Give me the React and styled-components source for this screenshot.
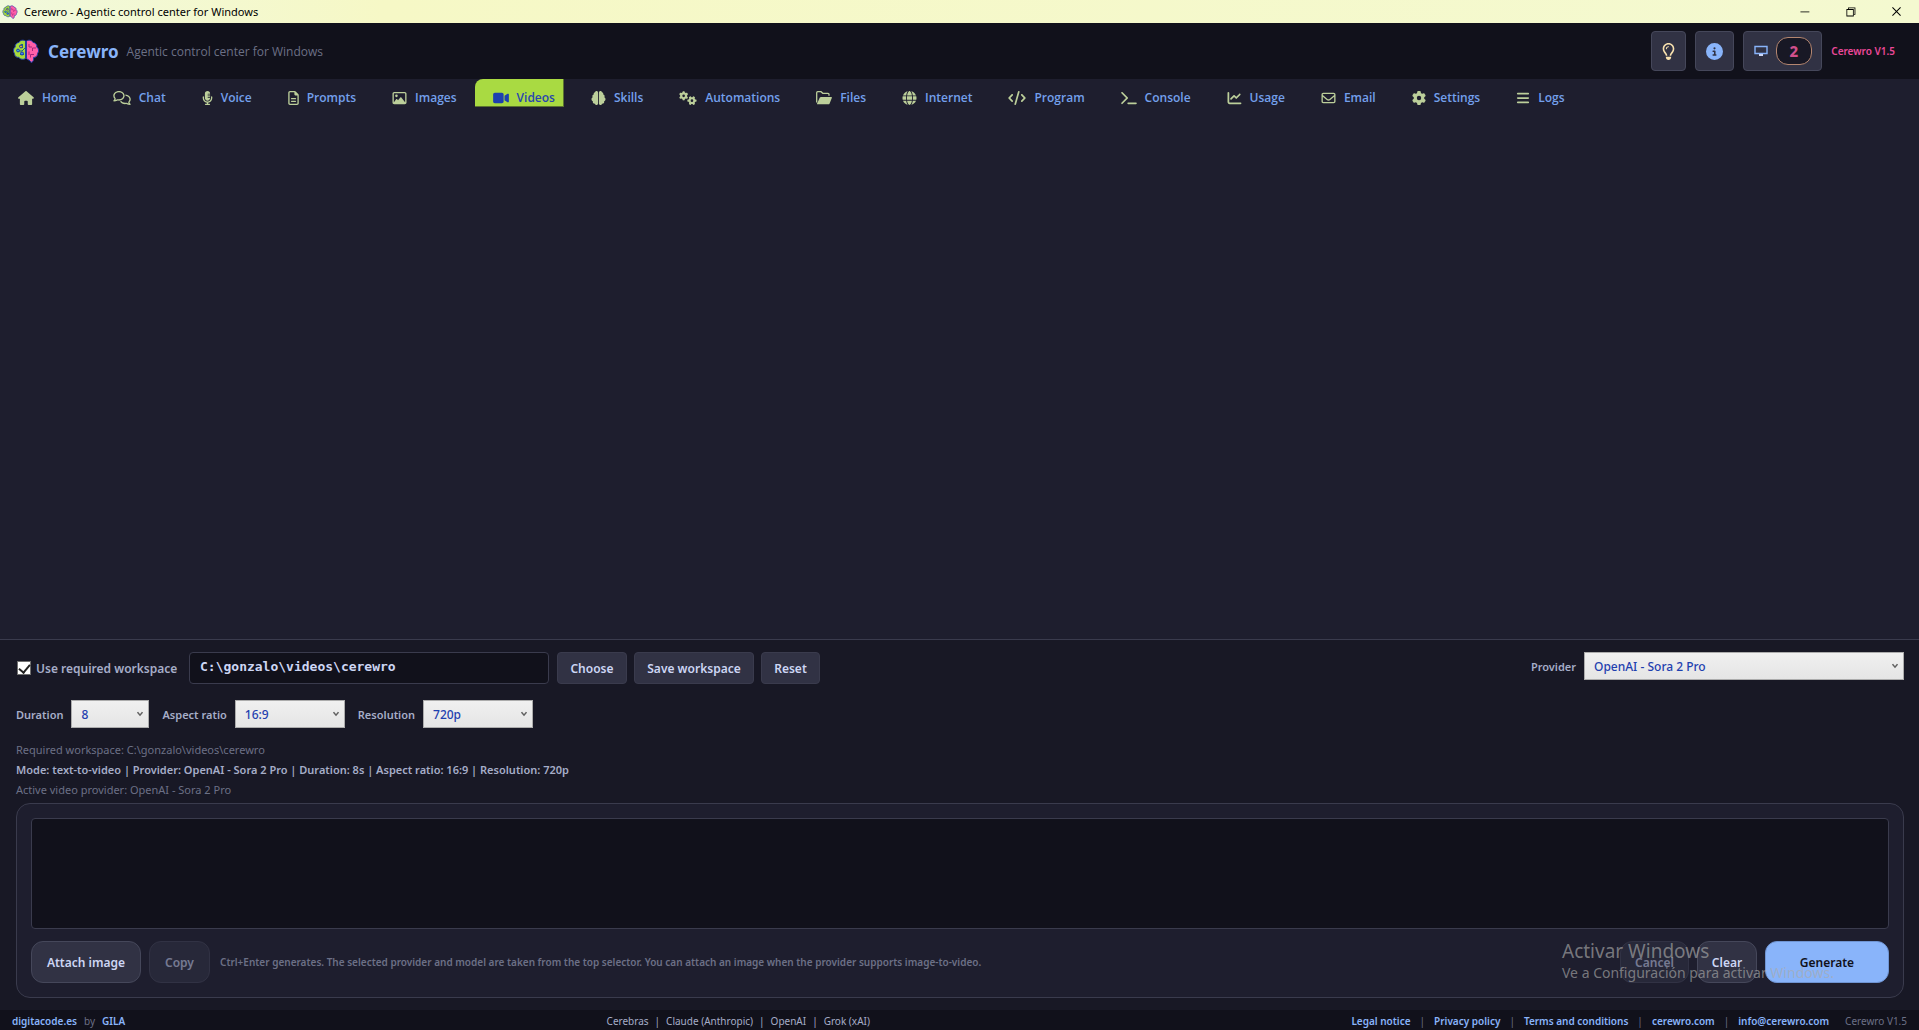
import React, { useState } from "react";
import styled, { createGlobalStyle } from "styled-components";
import {
  FaHouse,
  FaRegComments,
  FaMicrophoneLines,
  FaRegFileLines,
  FaRegImage,
  FaVideo,
  FaBrain,
  FaGears,
  FaGlobe,
  FaCode,
  FaTerminal,
  FaChartLine,
  FaRegEnvelope,
  FaGear,
  FaBars,
  FaRegLightbulb,
  FaCircleInfo,
} from "react-icons/fa6";
import {
  VscChromeMinimize,
  VscChromeRestore,
  VscChromeClose,
} from "react-icons/vsc";

const TABS = [
  { name: "Home", Icon: FaHouse, iconWidth: 16 },
  { name: "Chat", Icon: FaRegComments, iconWidth: 18 },
  { name: "Voice", Icon: FaMicrophoneLines, iconWidth: 11 },
  { name: "Prompts", Icon: FaRegFileLines, iconWidth: 11 },
  { name: "Images", Icon: FaRegImage, iconWidth: 15 },
  { name: "Videos", Icon: FaVideo, iconWidth: 16 },
  { name: "Skills", Icon: FaBrain, iconWidth: 15 },
  { name: "Automations", Icon: FaGears, iconWidth: 18 },
  { name: "Files", Icon: FolderIcon, iconWidth: 16 },
  { name: "Internet", Icon: FaGlobe, iconWidth: 15 },
  { name: "Program", Icon: FaCode, iconWidth: 18 },
  { name: "Console", Icon: FaTerminal, iconWidth: 16 },
  { name: "Usage", Icon: FaChartLine, iconWidth: 15 },
  { name: "Email", Icon: FaRegEnvelope, iconWidth: 15 },
  { name: "Settings", Icon: FaGear, iconWidth: 14 },
  { name: "Logs", Icon: FaBars, iconWidth: 14 },
];

const PARTNERS = ["Cerebras", "Claude (Anthropic)", "OpenAI", "Grok (xAI)"];

const LEGAL_LINKS = [
  "Legal notice",
  "Privacy policy",
  "Terms and conditions",
  "cerewro.com",
  "info@cerewro.com",
];

function BrainLogo({ size }) {
  return (
    <svg width={size} height={size} viewBox="0 0 28 28" aria-hidden="true">
      <path
        d="M13.6 4C11 2.4 8 3.200 7 5.400 4.500 5.600 2.800 7.800 3.200 10 1.200 11.500.8 14.500 2.400 16.400 2.400 19 4.600 20.800 6.800 20.400 8.400 22.600 11.600 23 13.600 21.400Z"
        fill="#a6da3c"
        stroke="#1e3aa8"
        strokeWidth="1"
      />
      <path
        d="M14.400 4C17 2.400 20 3.200 21 5.400 23.500 5.600 25.200 7.800 24.800 10 26.800 11.500 27.200 14.500 25.600 16.400 25.600 19 23.400 20.800 21.600 20.400 22 22.600 21 25.600 19 25.400 18 23 16 23 14.400 21.400Z"
        fill="#ff5fa8"
        stroke="#1e3aa8"
        strokeWidth="1"
      />
      <path
        d="M17 7v3h3M24 11h-3.500v3M17 18v-3.500M22 17.500h-3.500v3"
        fill="none"
        stroke="#a3267c"
        strokeWidth="1"
      />
      <path
        d="M7 9.500l3-2.500M5 14h5l3-3M8 17.500h4M10.500 7v4"
        fill="none"
        stroke="#1b5f8c"
        strokeWidth="1"
      />
      <circle cx="9" cy="9.500" r="1.400" fill="#ffb02e" stroke="#1e3aa8" />
      <circle cx="6" cy="13.500" r="1.400" fill="#2fb8e0" stroke="#1e3aa8" />
      <circle cx="10" cy="16.500" r="1.500" fill="#3b82f6" stroke="#1e3aa8" />
    </svg>
  );
}

/* open folder with an outlined back and a solid front */
function FolderIcon() {
  return (
    <svg viewBox="0 0 16 14" aria-hidden="true">
      <path
        d="M.7 11.500V1.700Q.7.7 1.700.7H5L6.800 2.300H12Q13 2.300 13 3.300V4.800"
        fill="none"
        stroke="currentColor"
        strokeWidth="1.300"
      />
      <path
        d="M5 6H15.200Q16.200 6 15.800 7L13.600 12.400Q13.200 13.300 12.200 13.300H1.300Q.8 13.300 1.100 12.600L3.700 6.800Q4.100 6 5 6Z"
        fill="currentColor"
      />
    </svg>
  );
}

function Select({ id, options, width }) {
  return (
    <SelectBox $width={width}>
      <SelectInput id={id}>
        {options.map((option) => (
          <option key={option}>{option}</option>
        ))}
      </SelectInput>
      <SelectArrow viewBox="0 0 6 6" aria-hidden="true">
        <path d="M.5 1.200L3 4.200 5.500 1.200" />
      </SelectArrow>
    </SelectBox>
  );
}

function App() {
  const [activeTab, setActiveTab] = useState("Videos");
  const [required, setRequired] = useState(true);
  const [workspace, setWorkspace] = useState("C:\\gonzalo\\videos\\cerewro");
  const [prompt, setPrompt] = useState("");

  return (
    <Window>
      <GlobalStyle />
      <TitleBar>
        <BrainLogo size={16} />
        <TitleText>Cerewro - Agentic control center for Windows</TitleText>
        <WindowButton aria-label="Minimize">
          <VscChromeMinimize />
        </WindowButton>
        <WindowButton aria-label="Restore">
          <VscChromeRestore />
        </WindowButton>
        <WindowButton aria-label="Close">
          <VscChromeClose />
        </WindowButton>
      </TitleBar>

      <Header>
        <BrainLogo size={28} />
        <Brand>Cerewro</Brand>
        <Tagline>Agentic control center for Windows</Tagline>
        <HeaderTools>
          <ToolButton $width={35} $color="#f9e2af" aria-label="Tips">
            <FaRegLightbulb size={17} />
          </ToolButton>
          <ToolButton $width={39} $color="#89b4fa" aria-label="Information">
            <FaCircleInfo size={17} />
          </ToolButton>
          <ToolButton $width={79} $color="#89b4fa" aria-label="Screens">
            <svg width="14" height="12" viewBox="0 0 14 12">
              <path
                d="M1 1.500h12v7H1z"
                fill="none"
                stroke="currentColor"
                strokeWidth="1.400"
              />
              <path d="M5 9h4v2H5z" fill="#cdd6f4" />
            </svg>
            <ScreenCount>2</ScreenCount>
          </ToolButton>
          <Version>Cerewro V1.5</Version>
        </HeaderTools>
      </Header>

      <Nav>
        {TABS.map(({ name, Icon, iconWidth }) => (
          <Tab
            key={name}
            $active={name === activeTab}
            onClick={() => setActiveTab(name)}
          >
            <TabIcon $width={iconWidth}>
              <Icon />
            </TabIcon>
            {name}
          </Tab>
        ))}
      </Nav>

      <Gallery />

      <Panel>
        <WorkspaceRow>
          <CheckLabel>
            <CheckBox
              type="checkbox"
              checked={required}
              onChange={(e) => setRequired(e.target.checked)}
            />
            Use required workspace
          </CheckLabel>
          <PathInput
            type="text"
            aria-label="Workspace path"
            value={workspace}
            onChange={(e) => setWorkspace(e.target.value)}
          />
          <SmallButtons>
            <SmallButton $width={70}>Choose</SmallButton>
            <SmallButton $width={120}>Save workspace</SmallButton>
            <SmallButton $width={59}>Reset</SmallButton>
          </SmallButtons>
          <ProviderField>
            <FieldLabel htmlFor="provider">Provider</FieldLabel>
            <Select
              id="provider"
              width={320}
              options={["OpenAI - Sora 2 Pro"]}
            />
          </ProviderField>
        </WorkspaceRow>

        <OptionsRow>
          <Field>
            <FieldLabel htmlFor="duration">Duration</FieldLabel>
            <Select id="duration" width={78} options={["8", "4", "12"]} />
          </Field>
          <Field>
            <FieldLabel htmlFor="ratio">Aspect ratio</FieldLabel>
            <Select id="ratio" width={110} options={["16:9", "9:16"]} />
          </Field>
          <Field>
            <FieldLabel htmlFor="resolution">Resolution</FieldLabel>
            <Select id="resolution" width={110} options={["720p", "1080p"]} />
          </Field>
        </OptionsRow>

        <Status>
          <StatusLine>Required workspace: {workspace}</StatusLine>
          <StatusLine $strong>
            Mode: text-to-video | Provider: OpenAI - Sora 2 Pro | Duration: 8s |
            Aspect ratio: 16:9 | Resolution: 720p
          </StatusLine>
          <StatusLine>Active video provider: OpenAI - Sora 2 Pro</StatusLine>
        </Status>

        <Composer>
          <PromptInput
            aria-label="Video prompt"
            value={prompt}
            onChange={(e) => setPrompt(e.target.value)}
          />
          <Actions>
            <ActionButton $width={110}>Attach image</ActionButton>
            <ActionButton $width={61} disabled>
              Copy
            </ActionButton>
            <Hint>
              Ctrl+Enter generates. The selected provider and model are taken
              from the top selector. You can attach an image when the provider
              supports image-to-video.
            </Hint>
            <ActionButton $width={69} disabled>
              Cancel
            </ActionButton>
            <ActionButton $width={60}>Clear</ActionButton>
            <ActionButton $width={124} $primary>
              Generate
            </ActionButton>
          </Actions>
        </Composer>
      </Panel>

      <Footer>
        <FooterGroup $gap={7}>
          <FooterLink href="#digitacode">digitacode.es</FooterLink>
          <Muted>by</Muted>
          <FooterLink href="#gila">GILA</FooterLink>
        </FooterGroup>
        <FooterGroup $gap={6}>
          {PARTNERS.map((partner, i) => (
            <React.Fragment key={partner}>
              {i > 0 && <span>|</span>}
              <span>{partner}</span>
            </React.Fragment>
          ))}
        </FooterGroup>
        <FooterGroup $gap={9}>
          {LEGAL_LINKS.map((link, i) => (
            <React.Fragment key={link}>
              {i > 0 && <Muted>|</Muted>}
              <FooterLink href={`#${i}`}>{link}</FooterLink>
            </React.Fragment>
          ))}
          <FooterVersion>Cerewro V1.5</FooterVersion>
        </FooterGroup>
      </Footer>

      <Watermark>
        <WatermarkTitle>Activar Windows</WatermarkTitle>
        <WatermarkText>
          Ve a Configuración para activar Windows.
        </WatermarkText>
      </Watermark>
    </Window>
  );
}

export default App;

const GlobalStyle = createGlobalStyle`
  * {
    box-sizing: border-box;
  }
  body {
    margin: 0;
    background-color: #1e1e2e;
  }
  button, input, select, textarea {
    font-family: inherit;
    margin: 0;
  }
`;

const Window = styled.div`
  position: relative;
  display: flex;
  flex-direction: column;
  min-height: 100vh;
  overflow: hidden;
  font-family: "Noto Sans", "Open Sans", sans-serif;
  font-size: 11px;
  color: #cdd6f4;
  background-color: #1e1e2e;
`;

const TitleBar = styled.div`
  display: flex;
  align-items: center;
  height: 23px;
  padding-left: 2px;
  background: linear-gradient(90deg, #f1f9dc, #f6f8c6 20%, #f4f9d0);
  color: #000000;
`;

const TitleText = styled.div`
  flex: 1;
  margin-left: 6px;
`;

const WindowButton = styled.button`
  display: flex;
  align-items: center;
  justify-content: center;
  width: 46px;
  height: 20px;
  padding: 0;
  border: 0;
  background: transparent;
  color: #000000;
  font-size: 13px;
`;

const Header = styled.header`
  display: flex;
  align-items: center;
  height: 56px;
  padding: 0 24px 0 12px;
  background-color: #11111b;
`;

const Brand = styled.div`
  margin-left: 8px;
  font-size: 17px;
  font-weight: 700;
  color: #89b4fa;
`;

const Tagline = styled.div`
  margin-left: 8px;
  font-family: "Open Sans", sans-serif;
  font-size: 12px;
  color: #6c7086;
`;

const HeaderTools = styled.div`
  display: flex;
  align-items: center;
  gap: 9px;
  margin-left: auto;
`;

const ToolButton = styled.button`
  display: flex;
  align-items: center;
  justify-content: center;
  gap: 8px;
  width: ${(props) => props.$width}px;
  height: 40px;
  padding: 0;
  border: 1px solid #45475a;
  border-radius: 4px;
  background-color: #313244;
  color: ${(props) => props.$color};
`;

const ScreenCount = styled.span`
  width: 36px;
  height: 28px;
  border: 1px solid #b48670;
  border-radius: 12px;
  background-color: #181825;
  color: #d0508c;
  font-size: 15px;
  font-weight: 800;
  line-height: 27px;
`;

const Version = styled.div`
  font-size: 10px;
  font-weight: 600;
  color: #ec4899;
`;

const Nav = styled.nav`
  display: flex;
  height: 40px;
  font-family: "Open Sans", sans-serif;
`;

const TabIcon = styled.span`
  display: flex;
  flex-shrink: 0;
  width: ${(props) => props.$width}px;
  height: 14px;
  color: #bccf9a;

  svg {
    width: 100%;
    height: 100%;
  }
`;

const Tab = styled.button`
  display: flex;
  align-items: center;
  gap: 8px;
  height: 28px;
  margin-right: 9px;
  padding: 11px 8px 0 18px;
  border: 0;
  border-right: 1px solid transparent;
  border-bottom: 1px solid transparent;
  border-top-left-radius: 8px;
  background-color: transparent;
  color: #74a0ec;
  font-size: 12px;
  font-weight: 600;
  line-height: 16px;
  white-space: nowrap;
  cursor: pointer;

  ${(props) =>
    props.$active &&
    `
    border-color: #5b7330;
    background-color: #a9da42;
    color: #2745b0;

    ${TabIcon} {
      color: #1e40af;
    }
  `}
`;

const Gallery = styled.main`
  flex: 1;
`;

const Panel = styled.section`
  padding: 12px 15px 12px 16px;
  border-top: 1px solid #3a3b4d;
  background-color: #181825;
`;

const WorkspaceRow = styled.div`
  display: flex;
  align-items: flex-start;
`;

const CheckLabel = styled.label`
  display: flex;
  align-items: center;
  width: 173px;
  height: 32px;
  gap: 5px;
  padding-left: 1px;
  font-size: 12px;
  font-weight: 600;
  color: #a6adc8;
  white-space: nowrap;
`;

const CheckBox = styled.input`
  display: flex;
  align-items: center;
  justify-content: center;
  appearance: none;
  width: 14px;
  height: 14px;
  border: 1px solid #707070;
  background-color: #ffffff;

  &:checked::after {
    content: "";
    width: 5px;
    height: 9px;
    margin-bottom: 2px;
    border: solid #212121;
    border-width: 0 2px 2px 0;
    transform: rotate(40deg);
  }
`;

const PathInput = styled.input`
  width: 360px;
  height: 32px;
  padding: 0 10px 3px;
  border: 1px solid #3a3b4d;
  border-radius: 4px;
  outline: 0;
  background-color: #11111b;
  color: #cdd6f4;
  && {
    font-family: "DejaVu Sans Mono", monospace;
  }
  font-size: 13px;
  font-weight: 700;
`;

const SmallButtons = styled.div`
  display: flex;
  gap: 7px;
  margin-left: 8px;
`;

const SmallButton = styled.button`
  width: ${(props) => props.$width}px;
  height: 32px;
  padding: 0;
  border: 1px solid #3a3b4d;
  border-radius: 4px;
  background-color: #313244;
  color: #cdd6f4;
  font-size: 12px;
  font-weight: 600;
  white-space: nowrap;
`;

const Field = styled.div`
  display: flex;
  align-items: center;
  gap: 8px;
`;

const ProviderField = styled(Field)`
  margin-left: auto;
`;

const FieldLabel = styled.label`
  font-weight: 600;
  color: #a6adc8;
`;

const SelectBox = styled.div`
  position: relative;
  width: ${(props) => props.$width}px;
`;

const SelectInput = styled.select`
  display: block;
  appearance: none;
  width: 100%;
  height: 28px;
  padding: 0 20px 0 9px;
  border: 1px solid #acacac;
  border-radius: 0;
  background: linear-gradient(#f0f0f0, #e5e5e5);
  color: #1e40af;
  font-size: 12px;
  font-weight: 500;
`;

const SelectArrow = styled.svg`
  position: absolute;
  top: 11px;
  right: 6px;
  width: 6px;
  height: 6px;
  fill: none;
  stroke: #606060;
  stroke-width: 1.5;
  pointer-events: none;
`;

const OptionsRow = styled.div`
  display: flex;
  gap: 13px;
  margin-top: 16px;
`;

const Status = styled.div`
  margin: 12px 0 3px;
`;

const StatusLine = styled.div`
  font-weight: ${(props) => (props.$strong ? 600 : 400)};
  line-height: 20px;
  color: ${(props) => (props.$strong ? "#a6adc8" : "#6c7086")};
`;

const Composer = styled.div`
  padding: 14px;
  border: 1px solid #3a3b4d;
  border-radius: 14px;
  background-color: #1e1e2e;
`;

const PromptInput = styled.textarea`
  display: block;
  width: 100%;
  height: 111px;
  padding: 10px;
  border: 1px solid #3a3b4d;
  border-radius: 4px;
  outline: 0;
  resize: none;
  background-color: #11111b;
  color: #cdd6f4;
  font-size: 12px;
`;

const Actions = styled.div`
  display: flex;
  align-items: center;
  gap: 8px;
  margin-top: 12px;
`;

const ActionButton = styled.button`
  width: ${(props) => props.$width}px;
  height: 42px;
  padding: 0;
  border: 1px solid ${(props) => (props.$primary ? "#6f94d2" : "#45475a")};
  border-radius: 12px;
  background-color: ${(props) => (props.$primary ? "#89b4fa" : "#313244")};
  color: ${(props) => (props.$primary ? "#11111b" : "#cdd6f4")};
  font-size: 12px;
  font-weight: 600;
  white-space: nowrap;

  &:disabled {
    opacity: 0.5;
  }
`;

const Hint = styled.div`
  flex: 1;
  margin-left: 2px;
  font-size: 10px;
  font-weight: 600;
  color: #6c7086;
`;

const Footer = styled.footer`
  display: flex;
  align-items: center;
  justify-content: space-between;
  height: 20px;
  padding: 2px 12px 0;
  background-color: #11111b;
  font-size: 10px;
  color: #a6adc8;
`;

const FooterGroup = styled.div`
  display: flex;
  gap: ${(props) => props.$gap}px;
`;

const FooterLink = styled.a`
  font-weight: 600;
  color: #89b4fa;
  text-decoration: none;
`;

const Muted = styled.span`
  color: #6c7086;
`;

const FooterVersion = styled(Muted)`
  margin-left: 7px;
`;

/* system notice that floats over the lower right corner of the window */
const Watermark = styled.div`
  position: absolute;
  right: 81px;
  bottom: 47px;
  width: 276px;
  color: rgba(170, 170, 170, 0.65);
  white-space: nowrap;
  pointer-events: none;
`;

const WatermarkTitle = styled.div`
  font-size: 19px;
  line-height: 24px;
`;

const WatermarkText = styled.div`
  font-size: 14px;
  line-height: 20px;
`;
